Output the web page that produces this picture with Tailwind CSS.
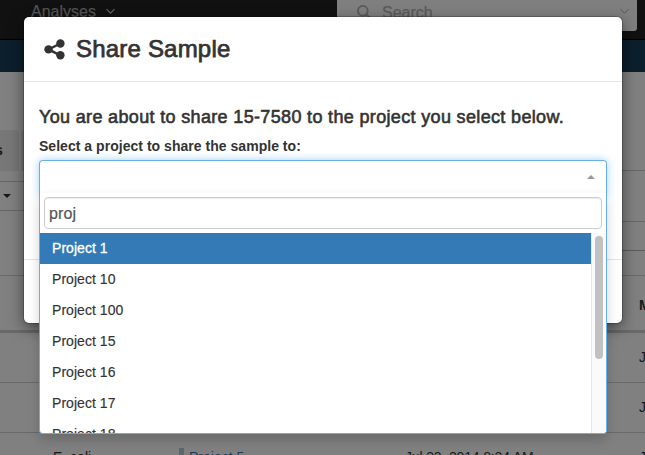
<!DOCTYPE html>
<html lang="en">
<head>
<meta charset="utf-8">
<title>Share Sample</title>
<script src="https://cdn.jsdelivr.net/npm/@tailwindcss/browser@4"></script>
</head>
<body class="relative h-[455px] w-[645px] overflow-hidden bg-[#808080] font-['Liberation_Sans',Arial,sans-serif] text-[14px] text-[#333]">
<!-- Dimmed page -->
<div class="flex h-[455px] flex-col overflow-hidden">
  <header class="flex h-10 shrink-0 items-start border-b border-black bg-[#111] text-[16px] leading-[24px] text-[#555]">
    <span class="ml-[31px] w-[65px] whitespace-nowrap [-webkit-text-stroke:0.2px_#555]">Analyses</span>
    <svg class="mt-[8px] ml-[10px] h-[7px] w-[9px]" viewBox="0 0 9 7" fill="none" stroke="#666" stroke-width="1.1"><path d="M.5 1.2 4.5 5.2 8.5 1.2"/></svg>
    <div class="ml-auto mr-2 flex h-[31px] w-[300px] items-start rounded-b-[3px] bg-[#7f7f7f] text-[#5a5a5a]">
      <svg class="mt-[5px] ml-[20px] h-[14px] w-[14px]" viewBox="0 0 14 14" fill="none" stroke="#5a5a5a" stroke-width="1.8"><circle cx="5.8" cy="5.8" r="4.9"/><path d="m9.2 9.2 4 4"/></svg>
      <span class="ml-[11px] mt-px [-webkit-text-stroke:0.2px_#5a5a5a]">Search</span>
      <svg class="mt-[8px] ml-auto mr-[8px] h-[7px] w-[9px]" viewBox="0 0 9 7" fill="none" stroke="#555" stroke-width="1"><path d="M.5 1.2 4.5 5.2 8.5 1.2"/></svg>
    </div>
  </header>
  <div class="h-8 shrink-0 bg-[#0b1f2d]"></div>
  <main class="shrink-0 bg-[#808080] text-[#181818]">
    <div class="flex h-[204px] justify-between border-b border-[#6a6a6a]">
      <div class="flex w-6 flex-col pt-[58px]">
        <div class="flex h-[41px] gap-[2px]">
          <div class="flex w-[19px] shrink-0 items-center overflow-hidden rounded-tr-[4px] bg-[#777] font-bold"><span class="-ml-[5px]">s</span></div>
          <div class="w-[3px] rounded-tl-[3px] bg-[#777]"></div>
        </div>
        <div class="mt-[10px] flex h-[30px] items-center border-y border-[#666] pl-[3px]">
          <svg class="h-[4px] w-[8px]" viewBox="0 0 8 4" fill="#181818"><path d="M0 0h8L4 4z"/></svg>
        </div>
      </div>
      <div class="w-[26px] pt-[98px]">
        <div class="h-[52px] border-y border-[#666]"></div>
        <div class="h-[29px] border-b border-[#5c5c5c]"></div>
      </div>
    </div>
    <div class="flex h-[57px] items-center justify-end border-b-[3px] border-[#696969] font-bold"><span class="w-[6px] overflow-hidden pt-[5px]">M</span></div>
    <div class="flex h-[50px] items-center justify-end border-b border-[#696969]"><span class="w-[6px] overflow-hidden">J</span></div>
    <div class="flex h-[50px] items-center justify-end border-b border-[#696969]"><span class="w-[6px] overflow-hidden">J</span></div>
    <div class="flex h-[48px] items-center whitespace-nowrap">
      <span class="ml-[53px] w-[126px]">E. coli</span>
      <span class="flex h-[18px] w-[226px] items-center border-l-[5px] border-[#5c666c] pl-[5px] text-[#1a3d5c]">Project 5</span>
      <span class="tracking-[-0.15px]">Jul 22, 2014 8:24 AM</span>
      <span class="ml-auto w-[6px] overflow-hidden">J</span>
    </div>
  </main>
</div>

<!-- Share dialog -->
<section class="absolute top-[17px] left-[24px] h-[306px] w-[598px] rounded-[5px] bg-white shadow-[0_5px_15px_rgba(0,0,0,0.5),0_0_0_1px_rgba(0,0,0,0.2)]">
  <header class="flex h-[65px] items-center border-b border-[#e5e5e5] pl-[20px]">
    <svg class="h-[21px] w-[21px]" viewBox="0 0 21 21" fill="#333"><circle cx="4.5" cy="10.4" r="4.2"/><circle cx="16.4" cy="4.5" r="4.2"/><circle cx="16.4" cy="16.3" r="4.2"/><path d="M16.4 4.5 4.5 10.4l11.9 5.9" fill="none" stroke="#333" stroke-width="2.4"/></svg>
    <h1 class="ml-[11px] text-[24px] leading-[30px] tracking-[0.2px] [-webkit-text-stroke:0.75px_#333]">Share Sample</h1>
  </header>
  <div class="h-[178px] border-b border-[#e5e5e5] px-[15px] pt-[24px]">
    <h2 class="whitespace-nowrap text-[18px] leading-[22px] tracking-[0.34px] [-webkit-text-stroke:0.6px_#333]">You are about to share 15-7580 to the project you select below.</h2>
    <label class="mt-[8px] block whitespace-nowrap font-bold leading-[20px] tracking-[0.03px]">Select a project to share the sample to:</label>
    <div class="mt-[4px] flex h-[36px] w-[568px] items-center justify-end rounded-t-[4px] border border-b-0 border-[#66afe9] pr-[11px] pb-[4px] shadow-[0_0_8px_rgba(102,175,233,0.6)]">
      <svg class="h-[4px] w-[8px]" viewBox="0 0 8 4" fill="#999"><path d="M0 4h8L4 0z"/></svg>
    </div>
  </div>
</section>

<!-- Project dropdown -->
<div class="absolute top-[193px] left-[39px] flex h-[241px] w-[568px] flex-col overflow-hidden rounded-b-[4px] border border-t-0 border-[#66afe9] bg-white shadow-[0_6px_12px_rgba(0,0,0,0.175)]">
  <div class="h-[40px] shrink-0 px-[4px] pt-[4px]">
    <div class="flex h-[32px] items-center rounded-[4px] border border-[#ccc] pt-[2px] pl-[4px] text-[16px] tracking-[0.15px] text-[#555] shadow-[inset_0_1px_1px_rgba(0,0,0,0.075)] [-webkit-text-stroke:0.2px_#555]">proj</div>
  </div>
  <div class="flex h-[200px] shrink-0">
    <ul class="h-[200px] w-[551px] overflow-hidden leading-[19px] tracking-[0.05px] [-webkit-text-stroke:0.15px]">
      <li class="h-[31px] bg-[#337ab7] px-[12px] py-[6px] text-white [-webkit-text-stroke:0.3px_white]">Project 1</li>
      <li class="h-[31px] px-[12px] py-[6px]">Project 10</li>
      <li class="h-[31px] px-[12px] py-[6px]">Project 100</li>
      <li class="h-[31px] px-[12px] py-[6px]">Project 15</li>
      <li class="h-[31px] px-[12px] py-[6px]">Project 16</li>
      <li class="h-[31px] px-[12px] py-[6px]">Project 17</li>
      <li class="h-[31px] px-[12px] py-[6px]">Project 18</li>
    </ul>
    <div class="w-[15px] border-l border-[#e7e7e7] bg-[#fafafa] pt-[3px] pl-[3px]"><div class="h-[123px] w-[8px] rounded-full bg-[#c1c1c1]"></div></div>
  </div>
</div>
</body>
</html>
